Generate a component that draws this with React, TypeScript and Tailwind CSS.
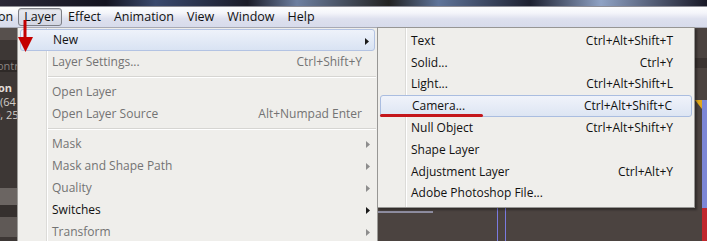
import React from 'react'

type Item = { label: string; shortcut?: string; arrow?: boolean; on?: boolean; active?: boolean } | 'sep'

const mainItems: Item[] = [
  { label: 'New', arrow: true, on: true, active: true },
  { label: 'Layer Settings...', shortcut: 'Ctrl+Shift+Y' },
  'sep',
  { label: 'Open Layer' },
  { label: 'Open Layer Source', shortcut: 'Alt+Numpad Enter' },
  'sep',
  { label: 'Mask', arrow: true },
  { label: 'Mask and Shape Path', arrow: true },
  { label: 'Quality', arrow: true },
  { label: 'Switches', arrow: true, on: true },
  { label: 'Transform', arrow: true },
]

const newItems = [
  { label: 'Text', shortcut: 'Ctrl+Alt+Shift+T' },
  { label: 'Solid...', shortcut: 'Ctrl+Y' },
  { label: 'Light...', shortcut: 'Ctrl+Alt+Shift+L' },
  { label: 'Camera...', shortcut: 'Ctrl+Alt+Shift+C', active: true },
  { label: 'Null Object', shortcut: 'Ctrl+Alt+Shift+Y' },
  { label: 'Shape Layer' },
  { label: 'Adjustment Layer', shortcut: 'Ctrl+Alt+Y' },
  { label: 'Adobe Photoshop File...' },
]

function Arrow({ on }: { on?: boolean }) {
  return (
    <svg width="4" height="7" viewBox="0 0 4 7" className="absolute right-[5px] top-[8px]">
      <path d="M0 0 L4 3.5 L0 7 Z" fill={on ? '#1a1a1a' : '#8d8d8d'} />
    </svg>
  )
}

function MenuBar() {
  const items = ['Effect', 'Animation', 'View', 'Window', 'Help']
  return (
    <div className="h-[22px] border-t border-b border-t-[#8e8e96] border-b-[#a7a9b4] bg-[linear-gradient(#fdfdfe_0%,#f4f5fa_30%,#dde0ee_60%,#d7dbeb_100%)] flex items-center text-[12.5px] text-[#111] overflow-hidden">
      <span className="-ml-[2px] pr-[5px]">on</span>
      <span className="h-[18px] px-[5px] flex items-center rounded-[3px] border border-[#7d7f86] bg-[linear-gradient(#e9eaf0,#d3d6e3)] shadow-[inset_0_1px_1px_rgba(0,0,0,0.15)]">Layer</span>
      <div className="flex ml-[6px] gap-[13px]">
        {items.map((t) => (
          <span key={t}>{t}</span>
        ))}
      </div>
    </div>
  )
}

function LeftPanel() {
  return (
    <div className="w-[17px] shrink-0 bg-[#3d3735] text-[11px] overflow-hidden whitespace-nowrap flex flex-col">
      <div className="h-[12px] bg-[#57504d]" />
      <div className="h-[20px]" />
      <div className="h-[12px] bg-[#2e2927] text-[#8b8582] leading-[12px] -ml-[3px]">ontr</div>
      <div className="h-[9px]" />
      <div className="h-[14px] leading-[14px] font-bold text-[#e2ded9] -ml-[2px]">on</div>
      <div className="h-[13px] leading-[13px] text-[#d2cdc8]">(64</div>
      <div className="h-[13px] leading-[13px] text-[#d2cdc8] -ml-[3px]">), 25</div>
      <div className="h-[67px]" />
      <div className="h-[17px] bg-[#6b6562]" />
      <div className="h-[12px] bg-[#35302e]" />
      <div className="h-[20px] bg-[#5f5956]" />
    </div>
  )
}

function Workspace() {
  return (
    <div className="flex-1 relative bg-[#4b4340]">
      <div className="absolute right-0 top-[30px] w-[12px] h-[10px] bg-[#3a3331]" />
      <div className="absolute right-0 top-[72px] w-[5px] h-[108px] bg-[#7c86d6]" />
      <div className="absolute right-0 top-[180px] w-[5px] h-[33px] bg-[#c0272d]" />
      <div className="absolute right-[5px] top-[72px] w-0 h-0 border-l-[7px] border-l-transparent border-t-[9px] border-t-[#e0a81c]" />
      <div className="absolute left-[361px] top-[183px] w-[55px] h-[2px] bg-[#8e8da0]" />
      <div className="absolute left-[480px] top-[180px] w-[1px] h-[40px] bg-[#7a7ae0]" />
      <div className="absolute left-[488px] top-[180px] w-[1px] h-[40px] bg-[#7a7ae0]" />
    </div>
  )
}

function MainMenu() {
  return (
    <div className="absolute left-[17px] top-[28px] w-[361px] h-[220px] bg-[#efeeeb] border-x border-[#9c9b98] pt-px">
      <div className="absolute left-[28px] top-0 bottom-0 w-px bg-[#dcdbd8]" />
      <div className="absolute left-[29px] top-0 bottom-0 w-px bg-white" />
      {mainItems.map((it, i) =>
        it === 'sep' ? (
          <div key={i} className="h-[8px] relative">
            <div className="absolute left-[30px] right-[1px] top-[3px] h-px bg-[#d6d5d2]" />
            <div className="absolute left-[30px] right-[1px] top-[4px] h-px bg-white" />
          </div>
        ) : (
          <div
            key={i}
            className={`relative mx-[2px] h-[22px] flex items-center pl-[32px] pr-[13px] rounded-[3px] ${
              it.active
                ? 'bg-[linear-gradient(#eef2fa,#d9e3f3)] border border-[#b3c3e3] pl-[31px] pr-[12px]'
                : ''
            } ${it.on ? 'text-[#111]' : 'text-[#737373]'}`}
          >
            <span className="flex-1">{it.label}</span>
            {it.shortcut && <span>{it.shortcut}</span>}
            {it.arrow && <Arrow on={it.on} />}
          </div>
        )
      )}
    </div>
  )
}

function NewMenu() {
  return (
    <div className="absolute left-[377px] top-[27px] w-[318px] h-[181px] bg-[#efeeeb] border border-[#979694] shadow-[2px_2px_2px_rgba(0,0,0,0.35)] pt-[2px]">
      <div className="absolute left-[27px] top-0 bottom-0 w-px bg-[#dcdbd8]" />
      <div className="absolute left-[28px] top-0 bottom-0 w-px bg-white" />
      {newItems.map((it) => (
        <div
          key={it.label}
          className={`relative mx-[2px] h-[21.8px] flex items-center pl-[31px] pr-[19px] rounded-[3px] text-[#111] ${
            it.active ? 'bg-[linear-gradient(#f0f3fa,#dde5f3)] border border-[#aabde0] pl-[30px] pr-[18px]' : ''
          }`}
        >
          <span className="flex-1">{it.label}</span>
          {it.shortcut && <span>{it.shortcut}</span>}
        </div>
      ))}
    </div>
  )
}

export default function App() {
  return (
    <div className="relative w-[707px] h-[241px] overflow-hidden font-['Open_Sans','Noto_Sans',sans-serif] text-[12px] leading-none select-none">
      <div className="h-[6px] bg-[linear-gradient(90deg,#2a2838_0%,#141420_15%,#3b4a6e_22%,#1a1b28_35%,#6d7fa0_42%,#222_55%,#5f7499_62%,#1d2030_75%,#8fa2c4_85%,#181826_100%)]" />
      <MenuBar />
      <div className="flex h-[213px]">
        <LeftPanel />
        <Workspace />
      </div>
      <MainMenu />
      <NewMenu />
      {/* red arrow */}
      <svg className="absolute left-[17px] top-[20px]" width="17" height="33" viewBox="17 20 17 33">
        <rect x="23.5" y="20" width="3" height="18" fill="#c40000" />
        <path d="M18 37 L33 37 L25.5 52 Z" fill="#c40000" />
      </svg>
      {/* red underline under Camera */}
      <div className="absolute left-[380px] top-[114px] w-[103px] h-[3px] rounded-full bg-[#c4161c]" />
    </div>
  )
}
